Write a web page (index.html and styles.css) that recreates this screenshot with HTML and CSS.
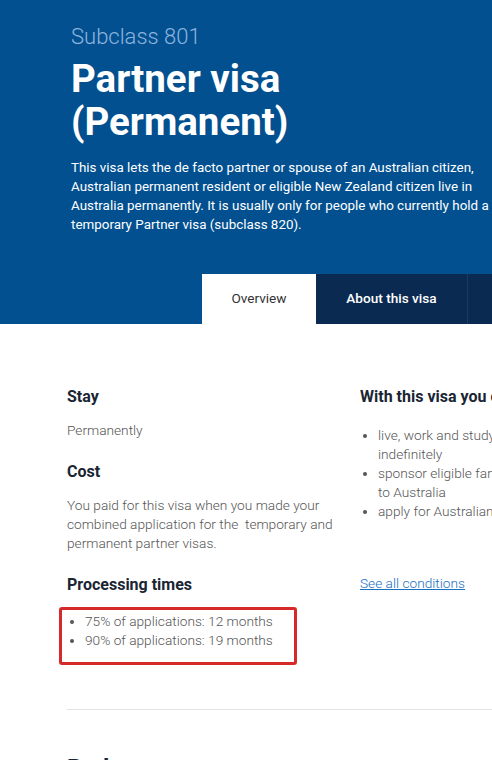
FILE: index.html
```html
<!DOCTYPE html>
<html lang="en">
<head>
<meta charset="utf-8">
<title>Partner visa (Permanent)</title>
<link rel="stylesheet" href="styles.css">
</head>
<body>
<div class="page">
  <header class="hero">
    <div class="hero-inner">
      <p class="subclass">Subclass 801</p>
      <h1 class="title">Partner visa<br>(Permanent)</h1>
      <p class="intro">This visa lets the de facto partner or spouse of an Australian citizen, Australian permanent resident or eligible New Zealand citizen live in Australia permanently. It is usually only for people who currently hold a temporary Partner visa (subclass 820).</p>
    </div>
    <nav class="tabs">
      <a class="tab tab-active">Overview</a>
      <a class="tab tab-dark">About this visa</a>
      <a class="tab tab-dark tab-more">Eligibility</a>
    </nav>
  </header>
  <main class="content">
    <div class="cols">
      <section class="col-left">
        <h2 class="h">Stay</h2>
        <p class="txt">Permanently</p>
        <h2 class="h">Cost</h2>
        <p class="txt">You paid for this visa when you made your combined application for the&nbsp; temporary and permanent partner visas.</p>
        <h2 class="h h-proc">Processing times</h2>
        <div class="highlight">
          <ul class="list">
            <li>75% of applications: 12 months</li>
            <li>90% of applications: 19 months</li>
          </ul>
        </div>
      </section>
      <section class="col-right">
        <h2 class="h">With this visa you can</h2>
        <ul class="list list-right">
          <li>live, work and study in Australia indefinitely</li>
          <li>sponsor eligible family members to come to Australia</li>
          <li>apply for Australian citizenship</li>
        </ul>
        <a class="link">See all conditions</a>
      </section>
    </div>
    <hr class="divider">
    <h2 class="h next">Pathways</h2>
  </main>
</div>
</body>
</html>
```
FILE: styles.css
```css
html, body {
  margin: 0;
  padding: 0;
  overflow: hidden;
  background: #fff;
}
.page {
  width: 900px;
  font-family: Roboto, "Liberation Sans", sans-serif;
}
.hero {
  background: #02508f;
  padding-top: 24px;
}
.hero-inner {
  padding-left: 71px;
  width: 440px;
}
.subclass {
  margin: 0;
  font-size: 22px;
  font-weight: 300;
  color: #8db4df;
  line-height: 26px;
}
.title {
  margin: 7px 0 0;
  font-size: 38.5px;
  font-weight: 700;
  line-height: 43px;
  color: #fff;
}
.intro {
  margin: 15px 0 0;
  font-size: 13.4px;
  line-height: 19px;
  color: #fff;
  font-weight: 400;
}
.tabs {
  display: flex;
  margin-top: 40px;
  padding-left: 202px;
  height: 50px;
}
.tab {
  display: flex;
  align-items: center;
  justify-content: center;
  font-size: 13.6px;
  height: 50px;
  padding-bottom: 3px;
  box-sizing: border-box;
}
.tab-active {
  width: 114px;
  background: #fff;
  color: #333;
}
.tab-dark {
  width: 151px;
  background: #0b2a52;
  color: #fff;
  font-weight: 500;
}
.tab-more {
  border-left: 1px solid #1e3a60;
}
.content {
  padding: 63px 0 0 67px;
}
.cols {
  display: flex;
}
.col-left {
  width: 272px;
  margin-right: 21px;
}
.col-right {
  width: 300px;
}
.h {
  margin: 0;
  font-size: 16px;
  font-weight: 700;
  color: #1a2533;
  line-height: 20px;
}
.h-proc {
  margin-top: 1px;
}
.txt {
  margin: 14px 0 22px;
  font-size: 13.7px;
  font-weight: 300;
  color: #555;
  line-height: 19px;
}
.highlight {
  margin: 12px 0 0 -8px;
  width: 232px;
  height: 52px;
  border: 3px solid #d62a2a;
  border-radius: 3px;
}
.list {
  margin: 0;
  padding: 2px 0 0 23px;
  font-size: 13.7px;
  font-weight: 300;
  color: #555;
  line-height: 19px;
}
.list-right {
  padding: 0 0 0 18px;
  margin-top: 19px;
  width: 250px;
}
.link {
  display: inline-block;
  margin-top: 54px;
  font-size: 13.7px;
  font-weight: 300;
  color: #1a6fbf;
  text-decoration: underline;
}
.divider {
  margin: 44px 0 0;
  border: 0;
  border-top: 1px solid #e3e3e3;
}
.next {
  margin-top: 48px;
  font-size: 24px;
}
```
